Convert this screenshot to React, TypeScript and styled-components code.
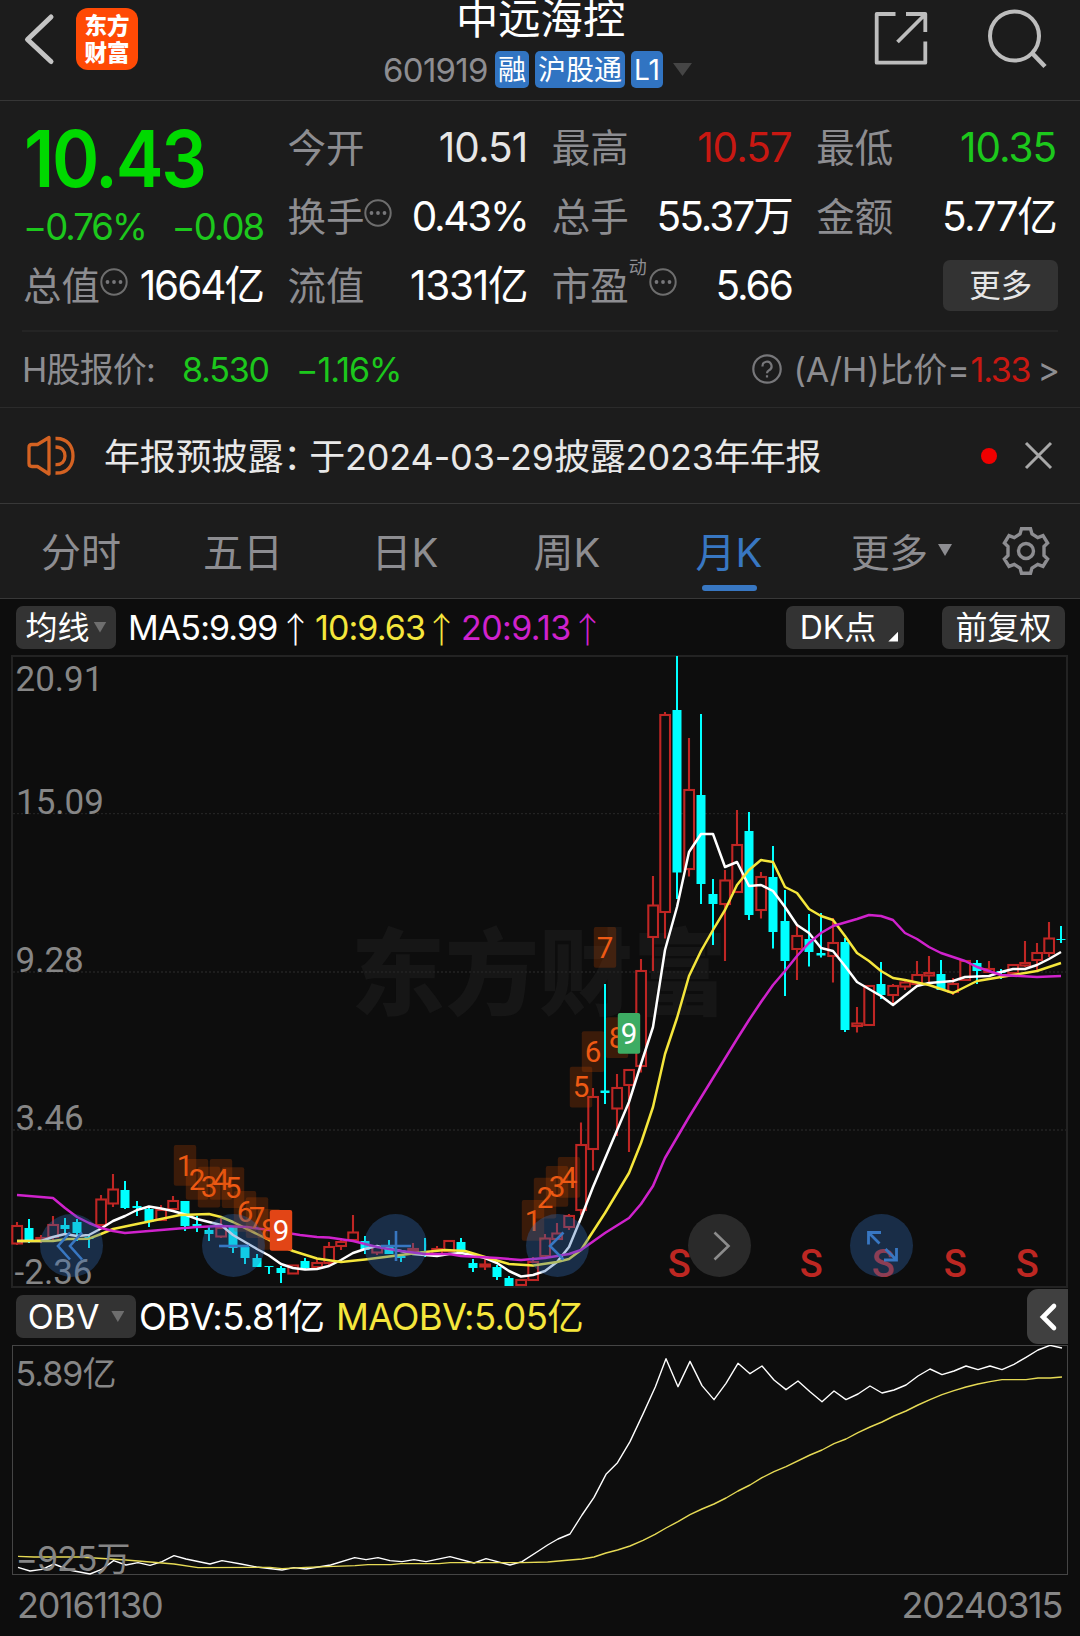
import React from "react";
import styled, { createGlobalStyle } from "styled-components";

const GlobalStyle = createGlobalStyle`
  * { box-sizing: border-box; }
  html, body { margin: 0; padding: 0; background: #0d0d0d; }
  body { font-family: Inter, "Noto Sans CJK SC", sans-serif; color: #fff; }
`;

const color = {
  panel: "#1c1c1c",
  chart: "#0d0d0d",
  muted: "#8d8d91",
  up: "#c81812",
  down: "#1cc81c",
  blue: "#3877c2",
  yellow: "#f5e63c",
  magenta: "#cf22cc",
};

/* ---------- shared ---------- */

const Screen = styled.div`
  width: 1080px;
  height: 1636px;
  overflow: hidden;
  display: flex;
  flex-direction: column;
  background: ${color.chart};
  white-space: nowrap;
`;

const Icon = styled.svg`
  display: block;
  flex: none;
  fill: none;
  overflow: visible;
`;

const Spacer = styled.div`
  flex: 1;
`;

const Triangle = styled.i<{ w: number; h: number; tint: string; gap?: number }>`
  flex: none;
  width: ${(p) => p.w}px;
  height: ${(p) => p.h}px;
  margin-left: ${(p) => p.gap ?? 0}px;
  background: ${(p) => p.tint};
  clip-path: polygon(0 0, 100% 0, 50% 100%);
`;

/* ---------- header ---------- */

const Header = styled.header`
  height: 101px;
  flex: none;
  display: grid;
  grid-template-columns: 384px 309px 1fr;
  background: ${color.panel};
  border-bottom: 1px solid #363636;
`;

const HeaderLeft = styled.div`
  display: flex;
  align-items: flex-start;
  padding: 8px 0 0 24px;
  gap: 22px;
`;

const Logo = styled.div`
  width: 62px;
  height: 62px;
  padding-bottom: 3px;
  border-radius: 12px;
  background: #ff4a05;
  display: flex;
  flex-direction: column;
  align-items: center;
  justify-content: center;
  font: 900 22.5px/27px "Noto Sans CJK SC", sans-serif;
`;

const HeaderCenter = styled.div`
  display: flex;
  flex-direction: column;
`;

const Title = styled.h1`
  margin: -2px 0 0 72px;
  font-size: 42.3px;
  line-height: 42px;
  font-weight: 400;
`;

const CodeRow = styled.div`
  display: flex;
  align-items: center;
  height: 37px;
  margin-top: 11px;
`;

const Code = styled.span`
  width: 112px;
  margin-left: -1px;
  padding-top: 1px;
  font-size: 33px;
  line-height: 37px;
  letter-spacing: -0.7px;
  color: ${color.muted};
`;

const Chip = styled.span<{ w: number }>`
  width: ${(p) => p.w}px;
  height: 37px;
  margin-right: 6px;
  border-radius: 5px;
  background: #3174c2;
  font-size: 28px;
  line-height: 38px;
  text-align: center;
`;

const HeaderRight = styled.div`
  display: flex;
  align-items: flex-start;
  justify-content: flex-end;
  gap: 60px;
  padding: 10px 34px 0 0;
`;

/* ---------- quote ---------- */

const Quote = styled.section`
  height: 229px;
  flex: none;
  display: grid;
  grid-template-columns: repeat(4, 240px);
  grid-template-rows: repeat(3, 69.2px);
  column-gap: 24.4px;
  padding: 12.4px 0 0 23px;
  background: ${color.panel};
`;

const PriceCell = styled.div`
  grid-row: span 2;
  display: flex;
  flex-direction: column;
`;

const Price = styled.div`
  margin: 6px 0 0 1px;
  font-size: 78px;
  line-height: 80px;
  font-weight: 600;
  letter-spacing: -2.5px;
  transform: scaleX(0.92);
  transform-origin: left;
  color: #00d900;
`;

const Change = styled.div`
  display: flex;
  justify-content: space-between;
  margin-top: 8px;
  font-size: 36.5px;
  line-height: 40px;
  letter-spacing: -2px;
  color: ${color.down};
`;

const Cell = styled.div`
  display: flex;
  align-items: center;
  line-height: 50px;
`;

const Label = styled.span`
  font-size: 38.5px;
  color: ${color.muted};
`;

const Value = styled.span<{ tint?: string; ls?: number }>`
  margin-left: auto;
  font-size: 40.5px;
  letter-spacing: ${(p) => p.ls ?? -2}px;
  color: ${(p) => p.tint ?? "#fff"};
`;

const Sup = styled.sup`
  align-self: flex-start;
  font-size: 18px;
  line-height: 20px;
  margin: 6px 2px 0 0;
  color: ${color.muted};
`;

const MoreButton = styled.button`
  margin: -2px -2px 0 auto;
  width: 115px;
  height: 51px;
  border: 0;
  border-radius: 7px;
  padding: 0;
  background: #333;
  color: #e6e6e6;
  font: 400 31.5px/52px Inter, "Noto Sans CJK SC", sans-serif;
`;

const QuoteDivider = styled.div`
  flex: none;
  height: 2px;
  background: linear-gradient(90deg, ${color.panel} 22px, #242424 22px, #242424 1058px, ${color.panel} 1058px);
`;

/* ---------- H share row ---------- */

const HShare = styled.section`
  height: 76px;
  flex: none;
  display: flex;
  align-items: center;
  padding: 1px 20px 0 22px;
  background: ${color.panel};
  border-bottom: 1px solid #2b2b2b;
  font-size: 34px;
  line-height: 50px;
  color: ${color.muted};
`;

const HText = styled.span<{ w: number; tint?: string; ls?: number }>`
  width: ${(p) => p.w}px;
  letter-spacing: ${(p) => p.ls ?? 0}px;
  color: ${(p) => p.tint ?? "inherit"};
`;

const Ratio = styled(HText)`
  margin-left: 12px;
`;

/* ---------- notice ---------- */

const Notice = styled.section`
  height: 96px;
  flex: none;
  display: flex;
  align-items: center;
  padding: 0 28px 0 27px;
  background: ${color.panel};
  border-bottom: 1px solid #383838;
`;

const NoticeText = styled.p`
  margin: 2px 0 0 29px;
  font-size: 36px;
  line-height: 50px;
  letter-spacing: -0.15px;
  color: #e8e8e8;
`;

const Colon = styled.span`
  margin-right: -10px;
`;

const Dot = styled.i`
  width: 16px;
  height: 16px;
  border-radius: 50%;
  margin-right: 28px;
  background: #f00000;
`;

/* ---------- tabs ---------- */

const Tabs = styled.nav`
  height: 95px;
  flex: none;
  display: flex;
  background: ${color.panel};
  border-bottom: 1px solid #383838;
`;

const Tab = styled.div<{ active?: boolean }>`
  position: relative;
  width: 162px;
  display: flex;
  align-items: center;
  justify-content: center;
  padding-bottom: 2px;
  font-size: 40px;
  color: ${(p) => (p.active ? color.blue : color.muted)};
  &::after {
    content: "";
    position: absolute;
    left: 53.5px;
    top: 81px;
    width: 55px;
    height: 6px;
    border-radius: 3px;
    background: ${(p) => (p.active ? color.blue : "transparent")};
  }
`;

const MoreTab = styled.div`
  width: 192px;
  padding: 0 0 2px 41px;
  display: flex;
  align-items: center;
  gap: 10px;
  font-size: 38.5px;
  color: ${color.muted};
`;

const GearWrap = styled.div`
  display: flex;
  align-items: center;
`;

/* ---------- chart bars ---------- */

const Toolbar = styled.div`
  height: 56px;
  flex: none;
  display: flex;
  align-items: center;
  padding: 0 15px 0 16px;
`;

const Pill = styled.div<{ w: number; size?: number; gap?: number }>`
  width: ${(p) => p.w}px;
  height: 43px;
  flex: none;
  display: flex;
  align-items: center;
  justify-content: center;
  margin-left: ${(p) => p.gap ?? 0}px;
  border-radius: 7px;
  background: #333;
  font-size: ${(p) => p.size ?? 32}px;
  line-height: 43px;
`;

const Corner = styled.i`
  width: 10px;
  height: 10px;
  margin: 19px -8px 0 12px;
  background: #fff;
  clip-path: polygon(100% 0, 100% 100%, 0 100%);
`;

const Indicator = styled.span<{ w: number; tint?: string; size?: number; gap?: number; ls?: number }>`
  width: ${(p) => p.w}px;
  flex: none;
  margin-left: ${(p) => p.gap ?? 0}px;
  padding-top: 1px;
  font-size: ${(p) => p.size ?? 34}px;
  line-height: 44px;
  letter-spacing: ${(p) => p.ls ?? -0.9}px;
  color: ${(p) => p.tint ?? "#fff"};
`;

const Arrow = styled.span<{ tint?: string; w: number; gap?: number }>`
  width: ${(p) => p.w}px;
  flex: none;
  margin-left: ${(p) => p.gap ?? 0}px;
  padding-top: 1px;
  font: 300 35px/44px "Noto Sans CJK SC", sans-serif;
  color: ${(p) => p.tint ?? "#fff"};
`;

const ObvBar = styled(Toolbar)`
  height: 57px;
  padding-right: 12px;
`;

const CollapseButton = styled.div`
  width: 41px;
  height: 55px;
  display: flex;
  align-items: center;
  justify-content: center;
  border-radius: 11px 0 0 11px;
  background: #404040;
`;

const PlotArea = styled.div<{ h: number }>`
  position: relative;
  flex: none;
  width: 1057px;
  height: ${(p) => p.h}px;
  margin-left: 11px;
`;

const Canvas = styled.svg`
  display: block;
  width: 100%;
  height: 100%;
`;

const Controls = styled.div`
  position: absolute;
  left: 29px;
  bottom: 11px;
  display: flex;
  gap: 99px;
`;

const RoundButton = styled.div<{ grey?: boolean }>`
  width: 63px;
  height: 63px;
  border-radius: 50%;
  display: flex;
  align-items: center;
  justify-content: center;
  background: ${(p) => (p.grey ? "rgba(98,98,98,.35)" : "rgba(50,107,180,.35)")};
  color: ${(p) => (p.grey ? "#8c8c8c" : color.blue)};
`;

const Dates = styled.footer`
  flex: 1;
  display: flex;
  align-items: center;
  justify-content: space-between;
  padding: 0 18px 1px 17px;
  font-size: 36px;
  letter-spacing: -1.3px;
  color: #868686;
`;

/* ---------- data ---------- */

type Candle = [kind: "r" | "c", high: number, top: number, bottom: number, low: number];

const candles: Candle[] = [
  ["r", 1222, 1226, 1243.5, 1245], ["c", 1219, 1228, 1240, 1243], ["r", 1235, 1238, 1240, 1243],
  ["r", 1216, 1225, 1237, 1240], ["c", 1218, 1225, 1229, 1233], ["c", 1219, 1222, 1233, 1241],
  ["c", 1235, 1237, 1239, 1248], ["r", 1195, 1199.5, 1225, 1225], ["r", 1174, 1189.5, 1203.5, 1207],
  ["c", 1181, 1190, 1208, 1209], ["c", 1201, 1206, 1208, 1216], ["c", 1206, 1209, 1222, 1227],
  ["r", 1205, 1210, 1220, 1221], ["r", 1196, 1201, 1209, 1210], ["c", 1201, 1201, 1226, 1231],
  ["c", 1216, 1224, 1226, 1232], ["c", 1227, 1230, 1234, 1241], ["r", 1217, 1228, 1236.5, 1238],
  ["c", 1227, 1227, 1248, 1253], ["c", 1247, 1247, 1258, 1264], ["c", 1254, 1258, 1267, 1267],
  ["c", 1266, 1266, 1267, 1274], ["c", 1266, 1268, 1273, 1283], ["r", 1265, 1265.5, 1273.5, 1274],
  ["c", 1258, 1261, 1268, 1269], ["r", 1259, 1263, 1267, 1268], ["r", 1242, 1247, 1263, 1266],
  ["r", 1238, 1242, 1246, 1250], ["r", 1215, 1232.5, 1240, 1240], ["c", 1236, 1241, 1250, 1254],
  ["r", 1246, 1247, 1252.5, 1255], ["c", 1240, 1245, 1254, 1254], ["c", 1255, 1256, 1258, 1262],
  ["r", 1243, 1249, 1251, 1254], ["c", 1238, 1251, 1253, 1257], ["r", 1246, 1249, 1255, 1255],
  ["r", 1240, 1241, 1251, 1252], ["c", 1238, 1242, 1252, 1252], ["c", 1259, 1263, 1268, 1272],
  ["r", 1259, 1264.5, 1266.5, 1270], ["c", 1265, 1267, 1277, 1280], ["c", 1276, 1278, 1286, 1286],
  ["r", 1279, 1280, 1285, 1286], ["r", 1257, 1262, 1280, 1281], ["r", 1234, 1238.5, 1256, 1257],
  ["r", 1223, 1233.5, 1239, 1240], ["r", 1214, 1216, 1227, 1230], ["r", 1122.5, 1145, 1210, 1215],
  ["r", 1088, 1097, 1149, 1170.5], ["c", 984, 1090.5, 1093, 1104], ["r", 1074, 1088, 1108.5, 1136],
  ["r", 1069, 1070, 1085, 1152], ["r", 959, 971, 1066, 1072.5], ["r", 876, 905.5, 937, 971],
  ["r", 712, 715, 912, 938.5], ["c", 656, 710, 872.5, 899], ["r", 738, 790, 869, 876.5],
  ["c", 714, 795, 884, 904], ["c", 879, 894, 904, 945], ["r", 870, 880.5, 904, 961],
  ["r", 810, 845, 892, 892], ["c", 812, 831, 915, 920], ["r", 872, 877, 910, 918.5],
  ["c", 846, 877, 932, 948.5], ["c", 890, 921, 961, 996], ["r", 925, 936, 949, 980],
  ["c", 914, 939, 952, 966.5], ["c", 913, 953, 955.5, 957.5], ["r", 918, 943, 956, 982.5],
  ["c", 938, 942, 1030, 1032], ["r", 1007, 1023.5, 1026, 1032.5], ["r", 985, 986, 1025, 1025.5],
  ["c", 962, 984, 995, 999], ["r", 984, 986, 995, 1004], ["r", 980, 982.5, 986.5, 990],
  ["r", 961, 975, 984, 986], ["r", 956, 973, 975.5, 983], ["c", 960, 974, 990, 990],
  ["r", 978, 984, 992, 995], ["r", 960, 961, 980, 981], ["c", 960, 963, 971, 984],
  ["r", 961, 969, 972, 973], ["c", 969, 971, 973, 979], ["r", 964, 965, 973, 974],
  ["r", 941, 963, 965.5, 967], ["r", 943, 953, 960, 970], ["r", 922, 938.5, 953, 957],
  ["c", 926, 939, 940, 943],
];

const ma5 =
  "17,1241 41,1241 53,1237 65,1234 77,1236 89,1235 101,1228.5 113,1221 125,1216 137,1210 149,1206.5 161,1208.5 173,1211 185,1214.5 197,1219 209,1222 221,1225 233,1235 245,1242 257,1249 269,1255.5 281,1264 293,1268 305,1269.5 317,1269 329,1266 341,1260 353,1253 365,1249 377,1246 389,1249 401,1251 413,1254 425,1255 437,1256 449,1254 461,1253 473,1255 485,1258 497,1263 509,1271 521,1276.5 533,1275 545,1271 557,1262 569,1247 581,1218 593,1187 629,1102 641,1064 653,1027 665,950 677,907 689,852 701,834 713,834 725,867 737,862 749,886 761,885 773,891 785,907 797,925 809,933 821,948 833,951 845,966 857,982 869,989 881,996 893,1005 917,986 929,983 941,982 953,981 965,977 989,976 1001,972 1013,969 1025,969 1037,965 1049,959 1061,952";
const ma10 =
  "17,1241 53,1241 67,1239 89,1238.7 101,1234 113,1229 137,1224 161,1219 180,1215 209,1214 221,1217 233,1222 257,1234 269,1240 293,1251 317,1258.5 341,1262 365,1259.5 401,1255 425,1252 445,1250 465,1251 485,1257 509,1264 533,1265.5 557,1262 569,1259 581,1250 605,1213 629,1173 641,1143 653,1107 665,1054 677,1018 689,976 701,951 713,930 725,910 737,885 749,870 761,860 773,862 785,887 797,893 809,909 821,916 833,920 845,936 857,953 869,961 881,971 893,978 905,980 929,985 953,993 965,987 977,981 1001,977 1013,975 1037,971 1049,967 1061,963";
const ma20 =
  "17,1195 53,1198 65,1208 77,1217 89,1223 101,1228 113,1231 125,1233 161,1230 197,1227 221,1226 247,1227 269,1230 300,1235 317,1237 329,1237.5 353,1241 377,1247 401,1251 425,1254 449,1254 461,1256 497,1258 521,1260 545,1258 569,1254 581,1250 605,1233 629,1218 641,1204 653,1186 665,1158 689,1117 713,1078 737,1039 749,1020 761,1002 773,985 785,971 797,956 809,943 821,933 833,926 857,919 869,915 881,916 893,920 905,933 917,939 929,947 941,953 965,961 977,967 1001,975 1037,977 1061,976";

// Sequence tags: digit, candle index, top edge
type Tag = [digit: number, index: number, top: number];
const tags: Tag[] = [
  [1, 14, 1145], [2, 15, 1159], [3, 16, 1166.7], [4, 17, 1159], [5, 18, 1167.3],
  [6, 19, 1191], [7, 20, 1197.3], [8, 21, 1209], [9, 22, 1210],
  [1, 43, 1200], [2, 44, 1177.7], [3, 45, 1166], [4, 46, 1157], [5, 47, 1066.7],
  [6, 48, 1031.3], [7, 49, 927], [8, 50, 1017.3], [9, 51, 1013],
];

const sellMarks = [679.3, 811.3, 883.3, 955.3, 1027.3];

// OBV series: x in px, level in thirds of a px below the bar
type Level = [x: number, level: number];
const obv: Level[] = [
  [18, 832], [30, 843], [42, 838], [54, 822], [69, 840], [90, 852], [101.6, 838], [113.6, 812], [126, 825],
  [138, 818], [150, 826], [162, 815], [174, 797], [186, 807], [210, 822], [222, 812], [241, 822], [256.5, 831],
  [282, 840], [294, 833], [306, 837], [330.6, 825], [354.7, 803], [366, 809], [378, 803], [390, 812], [402, 815],
  [414, 809], [426, 815], [450, 800], [474, 819], [486, 806], [510, 825], [522, 815], [540, 780], [547.6, 765],
  [558, 747], [570, 732], [582, 675], [594, 622], [606, 553], [617.5, 518], [630, 455], [643.3, 370], [655.4, 290],
  [666, 206], [678, 290], [690, 214], [702, 287], [714, 329], [726, 280], [738, 220], [750, 251], [762, 228],
  [774, 270], [786, 299], [798, 273], [810, 305], [822, 335], [834, 303], [846, 329], [858, 312], [870, 288],
  [882, 309], [894, 300], [906, 285], [918, 258], [930, 237], [942, 254], [954, 243], [966, 228], [978, 239],
  [990, 228], [1002, 239], [1014, 223], [1026, 202], [1038, 180], [1050, 166], [1062, 174],
];
const maObv: Level[] = [
  [18, 799], [34, 801], [79, 801], [126, 810], [174, 822], [198, 833], [270, 832], [282, 836], [306, 832],
  [355, 827], [368, 824], [391, 824], [401, 821], [439, 821], [450, 818], [522, 818], [547.6, 816], [570, 810],
  [582, 807], [594, 801], [606, 789], [617.5, 780], [630, 768], [643, 751], [655, 733], [666, 714], [678, 695],
  [690, 674], [702, 657], [714, 642], [726, 624], [738, 603], [750, 585], [762, 563], [774, 545], [786, 530],
  [810, 495], [822, 480], [834, 461], [846, 447], [858, 428], [870, 411], [882, 396], [894, 378], [906, 363],
  [918, 345], [930, 329], [942, 314], [954, 302], [966, 291], [978, 282], [990, 275], [1002, 269], [1026, 269],
  [1038, 264], [1050, 264], [1062, 261],
];

const candleX = (i: number) => 17 + 12 * i;
const toPoints = (s: Level[]) => s.map(([x, v]) => `${x},${1290 + v / 3}`).join(" ");

/* ---------- parts ---------- */

const InfoIcon = () => (
  <Icon width={28} height={28} viewBox="0 0 28 28" transform="translate(0 -4)">
    <circle cx="14" cy="14" r="12.7" stroke="#6e6e6e" strokeWidth="2" />
    <g fill="#77777a">
      <circle cx="7.5" cy="14" r="1.9" />
      <circle cx="14" cy="14" r="1.9" />
      <circle cx="20.5" cy="14" r="1.9" />
    </g>
  </Icon>
);

const CandleMark = ({ c, i }: { c: Candle; i: number }) => {
  const [kind, high, top, bottom, low] = c;
  const x = candleX(i);
  if (kind === "c") {
    return (
      <g fill="#00ffff">
        <rect x={x - 1} y={high} width={2} height={low - high} />
        <rect x={x - 4.5} y={top} width={9} height={Math.max(bottom - top, 1)} />
      </g>
    );
  }
  return (
    <g stroke="#bf2624" strokeWidth={2.1} fill={color.chart}>
      <path d={`M${x} ${high}V${top}M${x} ${bottom}V${low}`} />
      <rect x={x - 4.7} y={top} width={9.7} height={bottom - top} />
    </g>
  );
};

const TagMark = ({ tag, solid }: { tag: Tag; solid?: string }) => {
  const [digit, index, top] = tag;
  const x = candleX(index);
  return (
    <g>
      <rect x={x - 11.2} y={top} width={22.4} height={40.7} rx={2} fill={solid ?? "#c84600"} fillOpacity={solid ? 1 : 0.25} />
      <text x={x} y={top + 30.5} textAnchor="middle" fontFamily="Roboto" fontSize={29.5} fill={solid ? "#fff" : "#ee5a14"}>
        {digit}
      </text>
    </g>
  );
};

const PriceChart = () => (
  <PlotArea h={633}>
    <Canvas viewBox="11 655 1057 633">
      <rect x="12" y="656" width="1055" height="631" fill="none" stroke="#232323" strokeWidth="2" />
      <text x="539" y="1008" textAnchor="middle" fontFamily="Noto Sans CJK SC" fontWeight="900" fontSize="94" fill="#161616">
        东方财富
      </text>
      <g stroke="#232323" strokeWidth="1.3" strokeDasharray="2 2">
        <path d="M13 813.7H1066M13 972H1066M13 1130H1066" />
      </g>
      <g fontFamily="Roboto" fontSize="35" fill="#868686">
        <text x="15.5" y="690.5">20.91</text>
        <text x="16" y="813.5">15.09</text>
        <text x="15.5" y="971.5">9.28</text>
        <text x="15.5" y="1130">3.46</text>
        <text x="14.5" y="1283.5" textLength="78">-2.36</text>
      </g>
      {candles.map((c, i) => (
        <CandleMark key={i} c={c} i={i} />
      ))}
      <g fill="none" strokeWidth="2.5" strokeLinejoin="round">
        <polyline points={ma5} stroke="#fff" />
        <polyline points={ma10} stroke={color.yellow} />
        <polyline points={ma20} stroke={color.magenta} />
      </g>
      {tags.map((t, i) => (
        <TagMark key={i} tag={t} solid={t[0] === 9 ? (i < 9 ? "#e24516" : "#3dac63") : undefined} />
      ))}
      <g fontFamily="Roboto" fontSize="38" fontWeight="500" fill="#bd2722" textAnchor="middle">
        {sellMarks.map((x) => (
          <text key={x} x={x} y="1277">S</text>
        ))}
      </g>
    </Canvas>
    <Controls>
      <RoundButton>
        <Icon width={32} height={32} viewBox="0 0 32 32" stroke="currentColor" strokeWidth={2.6}>
          <path d="M14 2.500L2 16L14 29.500M26 2.500L14 16L26 29.500" />
        </Icon>
      </RoundButton>
      <RoundButton>
        <Icon width={32} height={32} viewBox="0 0 32 32" stroke="currentColor" strokeWidth={2.6}>
          <path d="M1 16H31" />
        </Icon>
      </RoundButton>
      <RoundButton>
        <Icon width={32} height={32} viewBox="0 0 32 32" stroke="currentColor" strokeWidth={2.6}>
          <path d="M1 16H31M16 1V31" />
        </Icon>
      </RoundButton>
      <RoundButton>
        <Icon width={32} height={32} viewBox="0 0 32 32" stroke="currentColor" strokeWidth={2.6}>
          <path d="M21.500 2.500L8 16L21.500 29.500" />
        </Icon>
      </RoundButton>
      <RoundButton grey>
        <Icon width={32} height={32} viewBox="0 0 32 32" stroke="currentColor" strokeWidth={2.6}>
          <path d="M10.500 2.500L24.500 16L10.500 29.500" />
        </Icon>
      </RoundButton>
      <RoundButton>
        <Icon width={32} height={32} viewBox="0 0 32 32" stroke="currentColor" strokeWidth={2.8}>
          <path d="M2.500 14.500V2.500H15M2.500 2.500L13.500 13.500M30.500 18V30H18M30.500 30L19.500 19" />
        </Icon>
      </RoundButton>
    </Controls>
  </PlotArea>
);

const ObvChart = () => (
  <PlotArea h={230}>
    <Canvas viewBox="11 1345 1057 230">
      <rect x="12.500" y="1345.500" width="1055" height="229" fill="none" stroke="#454545" />
      <g fill="none" strokeWidth="1.4" strokeLinejoin="round">
        <polyline points={toPoints(obv)} stroke="#fff" />
        <polyline points={toPoints(maObv)} stroke="#e6da55" />
      </g>
      <g fontFamily="Inter, 'Noto Sans CJK SC'" fontSize="34" fill="#868686" letterSpacing="-1">
        <text x="15.5" y="1386">5.89亿</text>
        <text x="15.5" y="1571">−925万</text>
      </g>
    </Canvas>
  </PlotArea>
);

export default function App() {
  return (
    <Screen>
      <GlobalStyle />
      <Header>
        <HeaderLeft>
          <Icon width={30} height={62} viewBox="24 8 30 62" stroke="#c4c4c4" strokeWidth={5} strokeLinecap="round" strokeLinejoin="round">
            <path d="M51 17L27.500 39.500L51 61.500" />
          </Icon>
          <Logo>
            <span>东方</span>
            <span>财富</span>
          </Logo>
        </HeaderLeft>
        <HeaderCenter>
          <Title>中远海控</Title>
          <CodeRow>
            <Code>601919</Code>
            <Chip w={34}>融</Chip>
            <Chip w={90}>沪股通</Chip>
            <Chip w={32}>L1</Chip>
            <Triangle w={19} h={13} tint="#454545" gap={4} />
          </CodeRow>
        </HeaderCenter>
        <HeaderRight>
          <Icon width={54} height={56} viewBox="875 10.5 54 56" stroke="#bdbdbd" strokeWidth={3.8} strokeLinejoin="round">
            <path d="M896.500 14.500H877.700V63.200H926.300V42M907 14.500H926.300V32.500M926 15L898.500 42.500" />
          </Icon>
          <Icon width={58} height={60} viewBox="988 10 58 60" stroke="#bdbdbd" strokeWidth={4}>
            <circle cx="1014.500" cy="36" r="24.500" />
            <path d="M1031.500 52.500L1045 66.500" strokeWidth={4.500} />
          </Icon>
        </HeaderRight>
      </Header>

      <Quote>
        <PriceCell>
          <Price>10.43</Price>
          <Change>
            <span>−0.76%</span>
            <span>−0.08</span>
          </Change>
        </PriceCell>
        <Cell><Label>今开</Label><Value tint="#e6e6e6" ls={-0.9}>10.51</Value></Cell>
        <Cell><Label>最高</Label><Value tint={color.up} ls={-1}>10.57</Value></Cell>
        <Cell><Label>最低</Label><Value tint={color.down} ls={-1}>10.35</Value></Cell>
        <Cell><Label>换手</Label><InfoIcon /><Value ls={-2.3}>0.43%</Value></Cell>
        <Cell><Label>总手</Label><Value>55.37万</Value></Cell>
        <Cell><Label>金额</Label><Value ls={-1.5}>5.77亿</Value></Cell>
        <Cell><Label>总值</Label><InfoIcon /><Value>1664亿</Value></Cell>
        <Cell><Label>流值</Label><Value ls={-1.2}>1331亿</Value></Cell>
        <Cell><Label>市盈</Label><Sup>动</Sup><InfoIcon /><Value>5.66</Value></Cell>
        <Cell><MoreButton>更多</MoreButton></Cell>
      </Quote>
      <QuoteDivider />

      <HShare>
        <HText w={160} ls={-0.8}>H股报价:</HText>
        <HText w={114} tint={color.down} ls={-1.2}>8.530</HText>
        <HText w={112} tint={color.down} ls={-1}>−1.16%</HText>
        <Spacer />
        <Icon width={30} height={30} viewBox="0 1 30 30" stroke="#77777a" strokeWidth={2.2}>
          <circle cx="15" cy="15" r="13.700" />
          <path d="M10.500 12.500a4.500 4.500 0 1 1 6.500 3.700c-1.500.8-2 1.500-2 3M15 21.200v2.300" />
        </Icon>
        <Ratio w={177} ls={-0.1}>(A/H)比价=</Ratio>
        <HText w={67} tint={color.up} ls={-1.2}>1.33</HText>
        <span>&gt;</span>
      </HShare>

      <Notice>
        <Icon width={48} height={40} viewBox="27 435 48 40" stroke="#d46222" strokeWidth={3.3} strokeLinejoin="round">
          <path d="M37.500 443.500L49 436.500V473L37.500 465.500H32Q29 465.500 29 462.500V446.500Q29 443.500 32 443.500Z" />
          <path d="M55.500 437.500C68 437 73 446 73 455S68 472.500 55.500 472" />
          <path d="M55.500 446C62 446 65 450 65 455S62 464 55.500 463.500" />
        </Icon>
        <NoticeText>
          年报预披露<Colon>：</Colon>于2024-03-29披露2023年年报
        </NoticeText>
        <Spacer />
        <Dot />
        <Icon width={27} height={27} viewBox="0 0 27 27" stroke="#a8a8a8" strokeWidth={3}>
          <path d="M1 1L26 26M26 1L1 26" />
        </Icon>
      </Notice>

      <Tabs>
        <Tab>分时</Tab>
        <Tab>五日</Tab>
        <Tab>日K</Tab>
        <Tab>周K</Tab>
        <Tab active>月K</Tab>
        <MoreTab>
          更多
          <Triangle w={14} h={12} tint={color.muted} />
        </MoreTab>
        <GearWrap>
          <Icon width={48} height={50} viewBox="-24 -25 48 50" stroke={color.muted} strokeWidth={3.4}>
            <path d="M-4.500 -22.300H4.500L6 -17L11.800 -13.300L17 -15.300L21.600 -8L18 -4.500V4.500L21.600 8L17 15.300L11.800 13.300L6 17L4.500 22.300H-4.500L-6 17L-11.800 13.300L-17 15.300L-21.600 8L-18 4.500V-4.500L-21.600 -8L-17 -15.300L-11.800 -13.300L-6 -17Z" />
            <circle r="7.500" />
          </Icon>
        </GearWrap>
      </Tabs>

      <Toolbar>
        <Pill w={100}>
          均线
          <Triangle w={13} h={11} tint="#6e6e6e" gap={4} />
        </Pill>
        <Indicator w={150} gap={12}>MA5:9.99</Indicator>
        <Arrow w={37}>↑</Arrow>
        <Indicator w={109} tint={color.yellow}>10:9.63</Indicator>
        <Arrow w={37} tint={color.yellow}>↑</Arrow>
        <Indicator w={109} tint={color.magenta} ls={-0.6}>20:9.13</Indicator>
        <Arrow w={34} tint={color.magenta}>↑</Arrow>
        <Spacer />
        <Pill w={118}>
          DK点
          <Corner />
        </Pill>
        <Pill w={123} gap={38}>前复权</Pill>
      </Toolbar>
      <PriceChart />

      <ObvBar>
        <Pill w={120} size={34}>
          OBV
          <Triangle w={13} h={11} tint="#6e6e6e" gap={12} />
        </Pill>
        <Indicator w={197} size={36.5} gap={3} ls={-0.5}>OBV:5.81亿</Indicator>
        <Indicator w={260} size={36.5} tint={color.yellow} ls={-0.7}>MAOBV:5.05亿</Indicator>
        <Spacer />
        <CollapseButton>
          <Icon width={16} height={28} viewBox="0 0 16 28" stroke="#fff" strokeWidth={4.6} strokeLinecap="round">
            <path d="M14 3L3 14L14 25" />
          </Icon>
        </CollapseButton>
      </ObvBar>
      <ObvChart />

      <Dates>
        <span>20161130</span>
        <span>20240315</span>
      </Dates>
    </Screen>
  );
}
